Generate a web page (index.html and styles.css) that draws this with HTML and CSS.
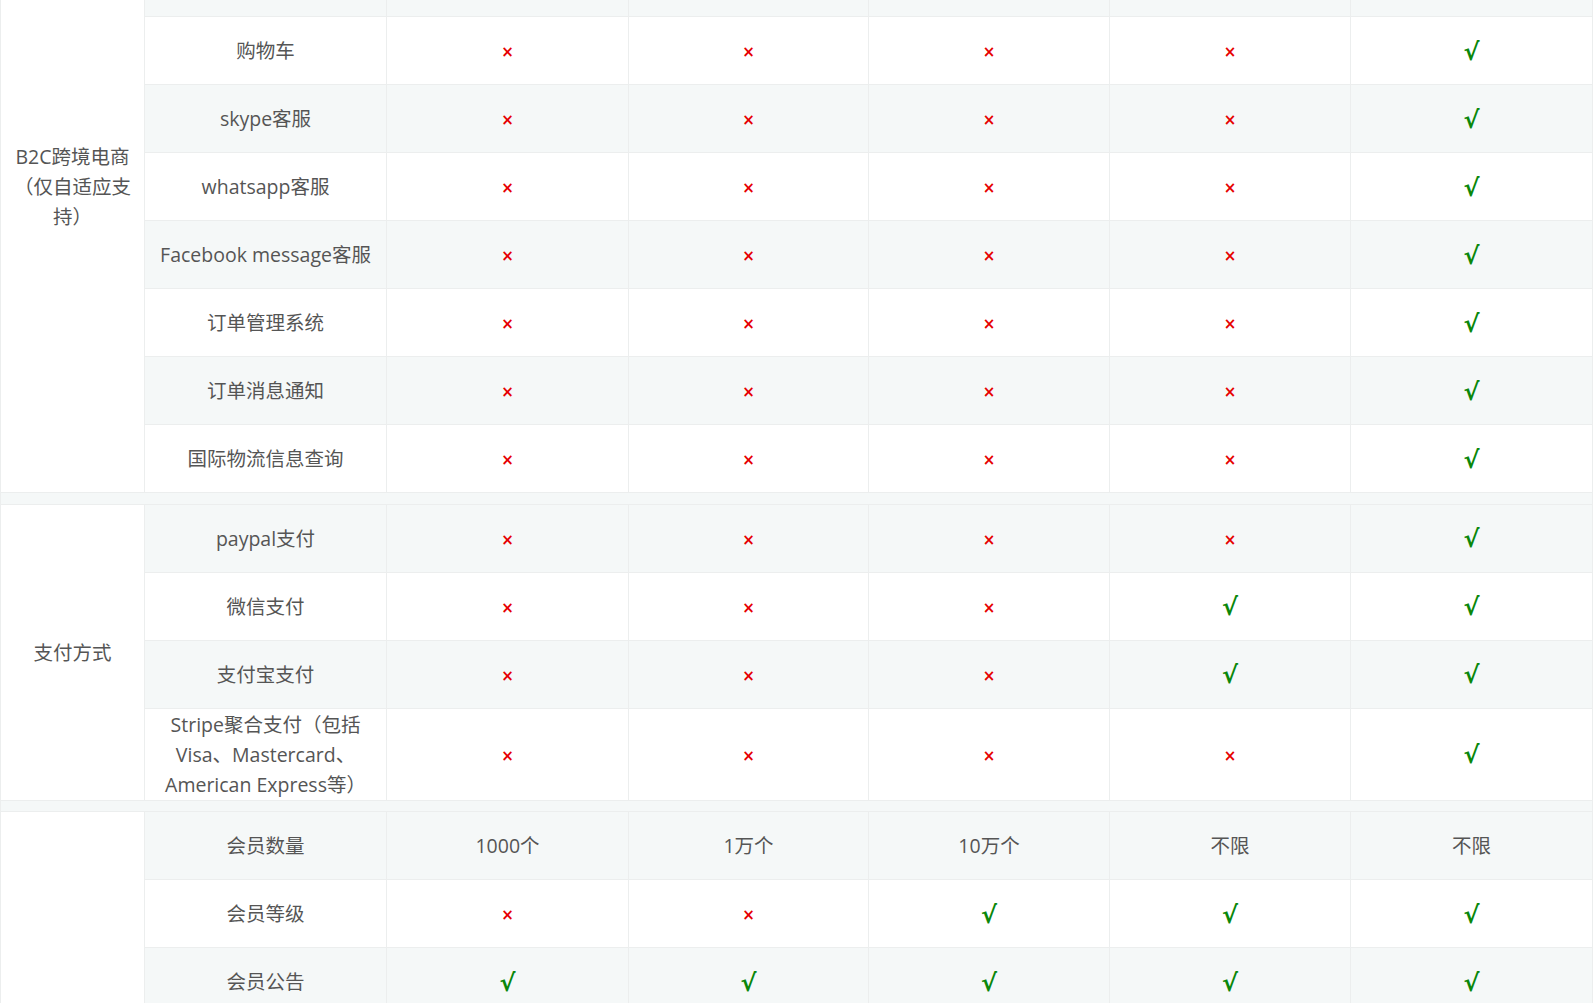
FILE: index.html
```html
<!DOCTYPE html>
<html lang="zh-CN">
<head>
<meta charset="utf-8">
<title>功能对比</title>
<link rel="stylesheet" href="styles.css">
</head>
<body>
<table class="cmp">
  <colgroup>
    <col class="c-grp"><col class="c-name"><col class="c-v"><col class="c-v4"><col class="c-v5"><col class="c-v6"><col class="c-v7">
  </colgroup>
  <tbody class="sect">
    <tr class="odd cut">
      <td rowspan="8" class="grp grp-b2c">B2C跨境电商<br>（仅自适应支<br>持）</td>
      <td></td><td></td><td></td><td></td><td></td><td></td>
    </tr>
    <tr class="even"><td class="name">购物车</td><td><span class="no">×</span></td><td><span class="no">×</span></td><td><span class="no">×</span></td><td><span class="no">×</span></td><td><span class="yes">√</span></td></tr>
    <tr class="odd"><td class="name">skype客服</td><td><span class="no">×</span></td><td><span class="no">×</span></td><td><span class="no">×</span></td><td><span class="no">×</span></td><td><span class="yes">√</span></td></tr>
    <tr class="even"><td class="name">whatsapp客服</td><td><span class="no">×</span></td><td><span class="no">×</span></td><td><span class="no">×</span></td><td><span class="no">×</span></td><td><span class="yes">√</span></td></tr>
    <tr class="odd"><td class="name">Facebook message客服</td><td><span class="no">×</span></td><td><span class="no">×</span></td><td><span class="no">×</span></td><td><span class="no">×</span></td><td><span class="yes">√</span></td></tr>
    <tr class="even"><td class="name">订单管理系统</td><td><span class="no">×</span></td><td><span class="no">×</span></td><td><span class="no">×</span></td><td><span class="no">×</span></td><td><span class="yes">√</span></td></tr>
    <tr class="odd"><td class="name">订单消息通知</td><td><span class="no">×</span></td><td><span class="no">×</span></td><td><span class="no">×</span></td><td><span class="no">×</span></td><td><span class="yes">√</span></td></tr>
    <tr class="even"><td class="name">国际物流信息查询</td><td><span class="no">×</span></td><td><span class="no">×</span></td><td><span class="no">×</span></td><td><span class="no">×</span></td><td><span class="yes">√</span></td></tr>
  </tbody>
  <tbody class="gap"><tr><td colspan="7"></td></tr></tbody>
  <tbody class="sect">
    <tr class="odd">
      <td rowspan="4" class="grp">支付方式</td>
      <td class="name">paypal支付</td><td><span class="no">×</span></td><td><span class="no">×</span></td><td><span class="no">×</span></td><td><span class="no">×</span></td><td><span class="yes">√</span></td>
    </tr>
    <tr class="even"><td class="name">微信支付</td><td><span class="no">×</span></td><td><span class="no">×</span></td><td><span class="no">×</span></td><td><span class="yes">√</span></td><td><span class="yes">√</span></td></tr>
    <tr class="odd"><td class="name">支付宝支付</td><td><span class="no">×</span></td><td><span class="no">×</span></td><td><span class="no">×</span></td><td><span class="yes">√</span></td><td><span class="yes">√</span></td></tr>
    <tr class="even tall"><td class="name">Stripe聚合支付（包括<br>Visa、Mastercard、<br>American Express等）</td><td><span class="no">×</span></td><td><span class="no">×</span></td><td><span class="no">×</span></td><td><span class="no">×</span></td><td><span class="yes">√</span></td></tr>
  </tbody>
  <tbody class="gap"><tr><td colspan="7"></td></tr></tbody>
  <tbody class="sect">
    <tr class="odd">
      <td rowspan="3" class="grp"></td>
      <td class="name">会员数量</td><td>1000个</td><td>1万个</td><td>10万个</td><td>不限</td><td>不限</td>
    </tr>
    <tr class="even"><td class="name">会员等级</td><td><span class="no">×</span></td><td><span class="no">×</span></td><td><span class="yes">√</span></td><td><span class="yes">√</span></td><td><span class="yes">√</span></td></tr>
    <tr class="odd"><td class="name">会员公告</td><td><span class="yes">√</span></td><td><span class="yes">√</span></td><td><span class="yes">√</span></td><td><span class="yes">√</span></td><td><span class="yes">√</span></td></tr>
  </tbody>
</table>
</body>
</html>
```

FILE: styles.css
```css
html, body {
  margin: 0;
  padding: 0;
  background: #ffffff;
}

body {
  font-family: "Open Sans", "Noto Sans CJK SC", sans-serif;
  font-size: 19.5px;
  color: #555555;
}

.cmp {
  border-collapse: collapse;
  table-layout: fixed;
  width: 1593px;
}

.c-grp { width: 144px; }
.c-name { width: 242px; }
.c-v { width: 242px; }
.c-v4 { width: 240px; }
.c-v5 { width: 241px; }
.c-v6 { width: 241px; }
.c-v7 { width: 242px; }

.cmp td {
  border: 1px solid #eceeee;
  height: 66px;
  padding: 1px 0 0;
  text-align: center;
  vertical-align: middle;
  line-height: 30px;
  white-space: nowrap;
}

.cmp tr.odd td { background: #f5f8f8; }
.cmp tr.even td { background: #ffffff; }
.cmp td.grp { background: #ffffff !important; }

.cmp tr.cut td {
  height: 15px;
  border-top: 0;
}

.cmp tr.tall td { height: 87px; }

.grp-b2c {
  padding-bottom: 119px !important;
}

.cmp .gap td {
  height: 10.5px;
  padding: 0;
  background: #f5f8f8;
}

.no {
  color: #e60000;
  font-family: "DejaVu Sans", sans-serif;
  font-size: 15px;
  font-weight: bold;
  vertical-align: 0;
}

.yes {
  color: #0a870a;
  font-family: "DejaVu Sans", sans-serif;
  font-size: 24px;
  font-weight: bold;
  vertical-align: -2px;
}
```
